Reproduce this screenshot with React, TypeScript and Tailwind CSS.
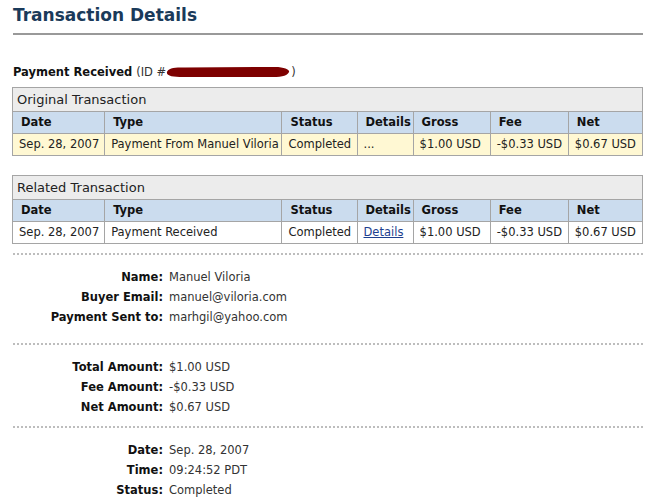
import React from "react";

const cols = [92, 177, 75, 56, 77, 78, 74];
const headers = ["Date", "Type", "Status", "Details", "Gross", "Fee", "Net"];

function TxTable({ caption, row, rowBg, link }: { caption: string; row: string[]; rowBg: string; link?: boolean }) {
  return (
    <table className="border-collapse border border-[#a5a5a5] w-[631px] table-fixed">
      <colgroup>
        {cols.map((w, i) => (
          <col key={i} style={{ width: w }} />
        ))}
      </colgroup>
      <thead>
        <tr>
          <th colSpan={7} className="h-[24px] bg-[#ececec] text-left font-normal text-[13px] text-[#222] px-[4px] border-b border-[#a5a5a5]">
            {caption}
          </th>
        </tr>
        <tr className="bg-[#cbdcee]">
          {headers.map((h) => (
            <th key={h} className="h-[22px] text-left font-bold text-[11.5px] text-[#111] px-[8px] border border-[#a5a5a5] whitespace-nowrap">
              {h}
            </th>
          ))}
        </tr>
      </thead>
      <tbody>
        <tr className={rowBg}>
          {row.map((c, i) => (
            <td key={i} className="h-[22px] text-[11.5px] text-[#222] px-[6px] border border-[#a5a5a5] whitespace-nowrap">
              {link && i === 3 ? <span className="text-[#1d3f8f] underline">{c}</span> : c}
            </td>
          ))}
        </tr>
      </tbody>
    </table>
  );
}

function Info({ rows, mb }: { rows: [string, string][]; mb: string }) {
  return (
    <div className={"grid grid-cols-[150px_auto] gap-x-[6px] gap-y-0 mt-[12px] " + mb}>
      {rows.map(([k, v]) => (
        <React.Fragment key={k}>
          <div className="text-right font-bold text-[11.5px] text-[#111] leading-[20px]">{k}</div>
          <div className="text-[11.5px] text-[#333] leading-[20px]">{v}</div>
        </React.Fragment>
      ))}
    </div>
  );
}

function Dotted() {
  return <div className="w-[630px] border-t-2 border-dotted border-[#bdbdbd]" />;
}

export default function App() {
  return (
    <div className="bg-white w-[651px] h-[504px] overflow-hidden pl-[12px] pt-[3px]" style={{ fontFamily: '"DejaVu Sans", Verdana, sans-serif' }}>
      <h1 className="text-[17px] font-bold text-[#1a3a5a] leading-[24px] pl-[1px]">Transaction Details</h1>
      <div className="mt-[6px] ml-[1px] w-[630px] h-[2px] bg-[#999]" />
      <div className="mt-[30px] pl-[1px] text-[11.5px] leading-[14px] flex items-center">
        <span className="font-bold text-[#111]">Payment Received</span>
        <span className="text-[#333] ml-[4px]">(ID #</span>
        <svg width="126" height="14" viewBox="0 0 126 14" className="-ml-[1px]">
          <path d="M2 7 C 3 3, 10 2, 20 2.5 L 110 2 C 120 2, 125 5, 124 7 C 123 10, 118 12, 108 12 L 18 12 C 8 12, 1 11, 2 7 Z" fill="#7d0000" />
        </svg>
        <span className="text-[#333]">)</span>
      </div>
      <div className="mt-[8px]">
        <TxTable
          caption="Original Transaction"
          rowBg="bg-[#fff8d3]"
          row={["Sep. 28, 2007", "Payment From Manuel Viloria", "Completed", "...", "$1.00 USD", "-$0.33 USD", "$0.67 USD"]}
        />
      </div>
      <div className="mt-[19px]">
        <TxTable
          caption="Related Transaction"
          rowBg="bg-white"
          link
          row={["Sep. 28, 2007", "Payment Received", "Completed", "Details", "$1.00 USD", "-$0.33 USD", "$0.67 USD"]}
        />
      </div>
      <div className="mt-[9px] ml-[1px]">
        <Dotted />
        <Info mb="mb-[16px]" rows={[["Name:", "Manuel Viloria"], ["Buyer Email:", "manuel@viloria.com"], ["Payment Sent to:", "marhgil@yahoo.com"]]} />
        <Dotted />
        <Info mb="mb-[9px]" rows={[["Total Amount:", "$1.00 USD"], ["Fee Amount:", "-$0.33 USD"], ["Net Amount:", "$0.67 USD"]]} />
        <Dotted />
        <Info mb="mb-[9px]" rows={[["Date:", "Sep. 28, 2007"], ["Time:", "09:24:52 PDT"], ["Status:", "Completed"]]} />
      </div>
    </div>
  );
}
